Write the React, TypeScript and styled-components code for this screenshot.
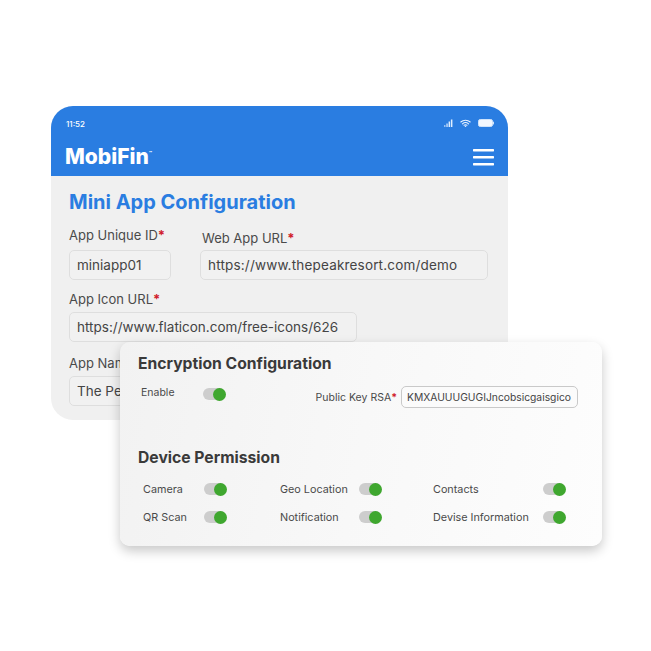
import React from "react";
import styled, { createGlobalStyle } from "styled-components";

const Global = createGlobalStyle`
  html, body { margin: 0; padding: 0; background: #fff; }
  #root { width: 651px; height: 651px; overflow: hidden; }
  * { box-sizing: border-box; }
`;

const FONT = `"Inter", "Noto Sans", sans-serif`;

const Stage = styled.div`
  position: relative;
  width: 651px;
  height: 651px;
  padding: 106px 143px 0 51px;
  background: #fff;
  font-family: ${FONT};
`;

const Phone = styled.div`
  height: 314px;
  border-radius: 22px;
  overflow: hidden;
  background: #f0f0f0;
`;

const Header = styled.header`
  height: 70px;
  background: #2a7de1;
  padding: 11px 14px 0 15px;
  color: #fff;
`;

const StatusBar = styled.div`
  display: flex;
  align-items: center;
  justify-content: space-between;
  height: 12px;
`;

const Time = styled.span`
  font-size: 8px;
  font-weight: 500;
  padding-top: 2px;
`;

const StatusIcons = styled.div`
  display: flex;
  align-items: center;
  gap: 7px;
`;

const BrandRow = styled.div`
  display: flex;
  align-items: center;
  justify-content: space-between;
  margin-top: 16px;
  height: 24px;
`;

const Logo = styled.div`
  font-size: 21px;
  font-weight: 800;
  letter-spacing: 0;
  line-height: 24px;
  margin-left: -1px;
`;

const LogoDot = styled.sup`
  font-size: 5px;
  vertical-align: 9px;
  line-height: 0;
`;

const Body = styled.div`
  padding: 14px 20px 0 18px;
`;

const Title = styled.h1`
  margin: 0 0 12px;
  font-size: 20px;
  line-height: 24px;
  font-weight: 700;
  color: #2a7de1;
`;

const TopFields = styled.div`
  display: grid;
  grid-template-columns: 102px 288px;
  column-gap: 29px;
  align-items: end;
`;

const Field = styled.div<{ $width?: number }>`
  display: flex;
  flex-direction: column;
  width: ${(p) => (p.$width ? `${p.$width}px` : "auto")};
`;

const Label = styled.label<{ $gap: number; $indent?: number }>`
  font-size: 13px;
  line-height: 18px;
  color: #4a4a4a;
  margin-bottom: ${(p) => p.$gap}px;
  padding-left: ${(p) => p.$indent ?? 0}px;
`;

const Star = styled.span`
  color: #d01c2c;
  font-weight: 700;
`;

const Input = styled.div<{ $spacing?: number }>`
  height: 30px;
  line-height: 28px;
  padding: 0 7px;
  font-size: 13.5px;
  letter-spacing: ${(p) => p.$spacing ?? 0}px;
  color: #444;
  background: #f1f1f1;
  border: 1px solid #dedede;
  border-radius: 5px;
  white-space: nowrap;
  overflow: hidden;
`;

const Stack = styled.div<{ $gap: number }>`
  margin-top: ${(p) => p.$gap}px;
`;

const Overlay = styled.section`
  position: absolute;
  left: 120px;
  top: 342px;
  width: 482px;
  height: 204px;
  padding: 12px 24px 0 18px;
  border-radius: 10px;
  background: linear-gradient(100deg, #f2f2f2 0%, #f8f8f8 50%, #fdfdfd 100%);
  box-shadow: 0 5px 12px rgba(0, 0, 0, 0.22);
`;

const SectionTitle = styled.h2`
  margin: 0;
  font-size: 15.7px;
  line-height: 20px;
  font-weight: 700;
  color: #3a3a3a;
`;

const EncryptionRow = styled.div`
  display: flex;
  align-items: flex-start;
  height: 62px;
  margin-top: 12px;
`;

const EnableGroup = styled.div`
  display: grid;
  grid-template-columns: 62px 22px;
  align-items: center;
  padding-left: 3px;
  height: 12px;
`;

const KeyGroup = styled.div`
  display: flex;
  align-items: center;
  margin-left: auto;
  gap: 4px;
`;

const SmallText = styled.span<{ $size?: number; $lift?: number }>`
  font-size: ${(p) => p.$size ?? 10.5}px;
  line-height: 13px;
  color: #4a4a4a;
  white-space: nowrap;
  margin-bottom: ${(p) => p.$lift ?? 0}px;
`;

const KeyInput = styled.div`
  width: 177px;
  height: 22px;
  line-height: 20px;
  padding: 0 5px;
  font-size: 10.3px;
  color: #444;
  background: #fbfbfb;
  border: 1px solid #c9c9c9;
  border-radius: 5px;
  white-space: nowrap;
  overflow: hidden;
`;

const Permission = styled.div<{ $width: number }>`
  display: grid;
  grid-template-columns: ${(p) => p.$width}px 23px;
  align-items: center;
`;

const PermissionRow = styled.div`
  display: grid;
  grid-template-columns: 137px 153px 1fr;
  height: 28px;
  align-items: center;
  padding-left: 5px;
`;

const Permissions = styled.div`
  margin-top: 7px;
`;

const Track = styled.span`
  position: relative;
  display: block;
  width: 22px;
  height: 12px;
  border-radius: 6px;
  background: #cdcdcd;
`;

const Knob = styled.span`
  position: absolute;
  right: -0.5px;
  top: -0.5px;
  width: 13px;
  height: 13px;
  border-radius: 50%;
  background: #3fa72f;
`;

const Toggle = () => (
  <Track>
    <Knob />
  </Track>
);

const Req = () => <Star>*</Star>;

const perms: [string, number][][] = [
  [["Camera", 61], ["Geo Location", 79], ["Contacts", 110]],
  [["QR Scan", 61], ["Notification", 79], ["Devise Information", 110]],
];

export default function App() {
  return (
    <Stage>
      <Global />
      <Phone>
        <Header>
          <StatusBar>
            <Time>11:52</Time>
            <StatusIcons>
              <svg width="9" height="8" viewBox="0 0 9 8" fill="#dfeeff">
                <rect x="0" y="6" width="1.5" height="2" opacity=".6" />
                <rect x="2.3" y="4.5" width="1.5" height="3.5" opacity=".8" />
                <rect x="4.6" y="2.5" width="1.5" height="5.5" />
                <rect x="6.9" y="0.5" width="1.5" height="7.5" />
              </svg>
              <svg width="11" height="9" viewBox="0 0 11 9" fill="none" stroke="#e8f2ff" strokeWidth="1.1" strokeLinecap="round">
                <path d="M.8 3C3.4.7 7.6.7 10.2 3" />
                <path d="M2.4 4.8c1.8-1.5 4.4-1.5 6.2 0" />
                <circle cx="5.5" cy="7.3" r=".8" fill="#e8f2ff" stroke="none" />
                <path d="M4 6.2c.9-.6 2.1-.6 3 0" />
              </svg>
              <svg width="16" height="8" viewBox="0 0 16 8">
                <rect x=".5" y=".5" width="14" height="7" rx="1.8" fill="#f2f7ff" stroke="#cfe3fb" />
                <rect x="15" y="2.5" width="1" height="3" rx=".5" fill="#cfe3fb" />
              </svg>
            </StatusIcons>
          </StatusBar>
          <BrandRow>
            <Logo>
              MobiFin<LogoDot>™</LogoDot>
            </Logo>
            <svg width="21" height="17" viewBox="0 0 21 17" fill="#fff">
              <rect y="0" width="21" height="2.4" rx=".6" />
              <rect y="7" width="21" height="2.4" rx=".6" />
              <rect y="14" width="21" height="2.4" rx=".6" />
            </svg>
          </BrandRow>
        </Header>
        <Body>
          <Title>Mini App Configuration</Title>
          <TopFields>
            <Field>
              <Label $gap={6}>App Unique ID<Req /></Label>
              <Input>miniapp01</Input>
            </Field>
            <Field>
              <Label $gap={3} $indent={2}>Web App URL<Req /></Label>
              <Input $spacing={0.18}>https://www.thepeakresort.com/demo</Input>
            </Field>
          </TopFields>
          <Stack $gap={10}>
            <Field $width={288}>
              <Label $gap={4}>App Icon URL<Req /></Label>
              <Input>https://www.flaticon.com/free-icons/626</Input>
            </Field>
          </Stack>
          <Stack $gap={12}>
            <Field $width={288}>
              <Label $gap={4}>App Name<Req /></Label>
              <Input>The Peak Resort</Input>
            </Field>
          </Stack>
        </Body>
      </Phone>
      <Overlay>
        <SectionTitle>Encryption Configuration</SectionTitle>
        <EncryptionRow>
          <EnableGroup>
            <SmallText $lift={3}>Enable</SmallText>
            <Toggle />
          </EnableGroup>
          <KeyGroup>
            <SmallText>Public Key RSA<Req /></SmallText>
            <KeyInput>KMXAUUUGUGIJncobsicgaisgico</KeyInput>
          </KeyGroup>
        </EncryptionRow>
        <SectionTitle>Device Permission</SectionTitle>
        <Permissions>
          {perms.map((row) => (
            <PermissionRow key={row[0][0]}>
              {row.map(([name, w]) => (
                <Permission key={name} $width={w}>
                  <SmallText $size={10.8}>{name}</SmallText>
                  <Toggle />
                </Permission>
              ))}
            </PermissionRow>
          ))}
        </Permissions>
      </Overlay>
    </Stage>
  );
}
